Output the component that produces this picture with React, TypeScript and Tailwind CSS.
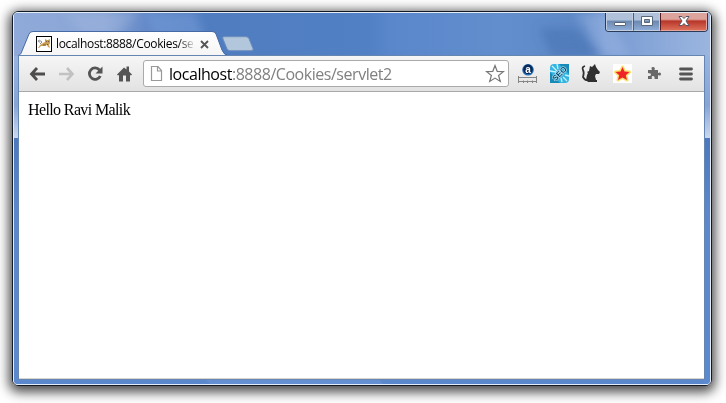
import React from 'react';

function GlassBackdrop() {
  return (
    <svg className="absolute inset-0 h-full w-full" viewBox="0 0 696 371" preserveAspectRatio="none" aria-hidden="true">
      <defs>
        <linearGradient id="top" x1="0" x2="1" y1="0" y2="0">
          <stop offset="0" stopColor="#8faad9" />
          <stop offset=".13" stopColor="#8aa6d6" />
          <stop offset=".19" stopColor="#6489c8" />
          <stop offset=".28" stopColor="#507dc0" />
          <stop offset=".51" stopColor="#5180c4" />
          <stop offset=".54" stopColor="#5a87cb" />
          <stop offset=".7" stopColor="#628ecd" />
          <stop offset=".82" stopColor="#5d88c6" />
          <stop offset=".85" stopColor="#789bd3" />
          <stop offset="1" stopColor="#9bb5df" />
        </linearGradient>
        <linearGradient id="side" x1="0" x2="0" y1="0" y2="1">
          <stop offset="0" stopColor="#98b3df" />
          <stop offset=".6" stopColor="#86a4d6" />
          <stop offset="1" stopColor="#cbd8ee" />
        </linearGradient>
        <linearGradient id="lower" x1="0" x2="0" y1="0" y2="1">
          <stop offset="0" stopColor="#4c78bd" />
          <stop offset=".3" stopColor="#5c88cb" />
          <stop offset="1" stopColor="#5b89cf" />
        </linearGradient>
        <filter id="soft"><feGaussianBlur stdDeviation="4" /></filter>
      </defs>
      <rect width="696" height="371" fill="#5b88cc" />
      <rect width="696" height="44" fill="url(#top)" />
      <g filter="url(#soft)">
        <path d="M50 0h75l-25 22H70z" fill="#a5badf" opacity=".4" />
        <path d="M130 0h50l14 30h-50z" fill="#7197d5" opacity=".6" />
        <path d="M525 15h36l27 29h-50z" fill="#4d78b6" opacity=".7" />
        <path d="M560 0h35l20 44h-22z" fill="#a5bce5" opacity=".4" />
      </g>
      <rect y="43" width="6" height="82" fill="url(#side)" />
      <rect x="690" y="43" width="6" height="82" fill="url(#side)" />
      <rect y="125" width="6" height="246" fill="url(#lower)" />
      <rect x="690" y="125" width="6" height="246" fill="url(#lower)" />
      <path d="M190 365h174l5 6H196z" fill="#6490d3" />
    </svg>
  );
}

function Tab() {
  return (
    <div className="relative mt-[18px] flex h-[25px] w-[210px] items-center pl-[18px]">
      <svg className="absolute left-0 top-0" width="210" height="25" viewBox="0 0 210 25">
        <defs>
          <linearGradient id="tabfill" x1="0" x2="0" y1="0" y2="1">
            <stop stopColor="#ffffff" />
            <stop offset="1" stopColor="#f5f5f5" />
          </linearGradient>
        </defs>
        <path d="M0 25C2 24 3 23 4 20L11 3Q12 .5 15 .5H194Q197 .5 198 3L204 19Q206 24 210 24.5V25Z" fill="url(#tabfill)" />
        <path d="M0 24.5C2 24 3 23 4 20L11 3Q12 .5 15 .5H194Q197 .5 198 3L204 19Q206 24 210 24.5" fill="none" stroke="#456aa5" />
      </svg>
      <svg className="relative shrink-0" width="16" height="16" viewBox="0 0 16 16">
        <rect x=".5" y=".5" width="15" height="15" fill="#fff" stroke="#000" />
        <path d="M2 12l2-3 3-2 2-1 0-3 2 1h1l2-1v4l-1 2 1 3-2-1-1-2-3 1-3 0-2 2z" fill="#c99d52" />
        <path d="M6 6Q3 3 2 5q0 1 2 1M4 8l2-2" fill="none" stroke="#848b85" />
        <path d="M10 5.5h1m1 0h1M7 9h3M11 8l1 1" stroke="#755e35" />
      </svg>
      <span className="relative ml-1 w-[141px] overflow-hidden whitespace-nowrap bg-gradient-to-r from-black from-[85%] to-[#ffffff] to-[99%] bg-clip-text font-['Open_Sans','Noto_Sans',sans-serif] text-[12px] leading-4 tracking-[-0.34px] text-transparent">localhost:8888/Cookies/se</span>
      <svg className="relative ml-[3px] mt-px shrink-0" width="9" height="9" viewBox="0 0 9 9">
        <path d="M1 1l7 7M8 1L1 8" stroke="#555" strokeWidth="1.8" />
      </svg>
    </div>
  );
}

function WindowControls() {
  return (
    <div className="-mt-px ml-auto mr-[2px] flex h-[20px] w-[103px] overflow-hidden rounded-b-[4px] border border-t-0 border-[#283b59]">
      <div className="flex w-[27px] justify-center border border-t-0 border-[#c0cde1] bg-linear-to-b from-[#b0c1da] from-45% via-[#6b88b1] via-50% to-[#8dabd4] pt-[10px]">
        <div className="h-[4px] w-[12px] rounded-[1px] border border-[#596477] bg-white" />
      </div>
      <div className="flex w-[27px] justify-center border border-t-0 border-l-[#49607f] border-r-[#c0cde1] border-b-[#c0cde1] bg-linear-to-b from-[#b0c1da] from-45% via-[#6b88b1] via-50% to-[#8dabd4] pt-[4px]">
        <svg width="12" height="10" viewBox="0 0 12 10">
          <path fillRule="evenodd" d="M.5.5h11v9H.5zM3.5 3.5v3h5v-3z" fill="#fff" stroke="#59677d" />
        </svg>
      </div>
      <div className="flex flex-1 justify-center border border-t-0 border-l-[#561d20] border-r-[#e5a49c] border-b-[#e5a49c] bg-linear-to-b from-[#dda49d] from-40% via-[#b73529] via-50% to-[#db6d58] pt-[4px]">
        <svg width="12" height="10" viewBox="0 0 12 10">
          <path d="M1 .5h3l2 2 2-2h3L8 5l3 4.5H8l-2-2-2 2H1L4 5z" fill="#fff" stroke="#575666" />
        </svg>
      </div>
    </div>
  );
}

function TitleBar() {
  return (
    <div className="relative flex h-[43px] items-start pl-[4px]">
      <Tab />
      <svg className="-ml-[7px] mt-[23px]" width="33" height="16" viewBox="0 0 33 16">
        <path d="M3 .7h22q2 0 3 2l4 10q.5 2-2 2H9q-2 0-3-2L2 3Q1 .7 3 .7z" fill="#b3c7dc" stroke="#6e8fbd" />
      </svg>
      <WindowControls />
    </div>
  );
}

function Navigation() {
  return (
    <div className="flex w-[124px] shrink-0 items-center pl-[10px]">
      <svg width="17" height="16" viewBox="0 0 17 16"><path d="M8 2L2.5 8 8 14M3 8h13" fill="none" stroke="#4d4d4d" strokeWidth="2.8" /></svg>
      <svg className="ml-[12px]" width="17" height="16" viewBox="0 0 17 16"><path d="M9 2l5.5 6L9 14M14 8H1" fill="none" stroke="#c2c2c2" strokeWidth="2.6" /></svg>
      <svg className="ml-[12px]" width="17" height="16" viewBox="0 0 17 16">
        <path d="M12.5 4A5.7 5.7 0 1 0 13.3 10" fill="none" stroke="#555" strokeWidth="2.8" /><path d="M15.5.5v7h-7z" fill="#555" />
      </svg>
      <svg className="ml-[12px]" width="17" height="16" viewBox="0 0 17 16"><path d="M8 1.5L1 8.5l1 1 1-.5v6.5h4v-6h3v6h4V9l1 .5 1-1-3-3V.5h-2.5v3z" fill="#555" /></svg>
    </div>
  );
}

function AddressBar() {
  return (
    <div className="flex h-[27px] w-[366px] shrink-0 items-center rounded-[3px] border border-[#aaa] bg-white pl-[6px] pr-[3px]">
      <svg className="shrink-0" width="13" height="17" viewBox="0 0 13 17">
        <path d="M1.5 1.5H8l3.5 4v10h-10zM7.5 2v4H11" fill="#fff" stroke="#999" strokeWidth="1.2" />
      </svg>
      <span className="ml-[6px] whitespace-nowrap font-['Open_Sans','Noto_Sans',sans-serif] text-[16px] leading-5 tracking-[-0.46px] text-[#808080]"><span className="text-black">localhost</span>:8888/Cookies/servlet2</span>
      <svg className="ml-auto shrink-0" width="20" height="20" viewBox="0 0 20 20">
        <path d="M10 1.5l2.2 5.8 6.2.3-4.8 3.9 1.7 6-5.3-3.4-5.3 3.4 1.7-6-4.8-3.9 6.2-.3z" fill="#fff" stroke="#777" strokeWidth="1.2" />
      </svg>
    </div>
  );
}

function Extensions() {
  return (
    <div className="flex flex-1 items-center pl-[9px]">
      <svg width="20" height="19" viewBox="0 0 20 19">
        <circle cx="10" cy="5.8" r="5.8" fill="#2870b5" /><circle cx="10" cy="5.4" r="4.8" fill="#06285a" />
        <text x="10" y="8.5" textAnchor="middle" fontFamily="Liberation Sans, sans-serif" fontSize="10" fontWeight="bold" fill="white">a</text>
        <path d="M.5 12v7M18.5 12v7M1 13.5h17M1 17.5h17M5.5 16.5v2.5M9.5 16.5v2.5M14.5 16.5v2.5" fill="none" stroke="#858585" />
      </svg>
      <svg className="ml-[12px]" width="20" height="20" viewBox="0 0 20 20">
        <rect width="19" height="19" rx="4" fill="#36b3df" />
        <path d="M9 0h10v10zM0 8v11h10z" fill="#168bb9" />
        <path d="M2 2l5 5M7 0l1 5M0 7l6 1M12 18l-1-4M17 17l-4-4M19 12l-4-1" stroke="#c1f2ff" strokeWidth="1.3" />
        <text transform="translate(5.4 17.6) rotate(-45)" fontFamily="Liberation Sans, sans-serif" fontSize="8" fontWeight="bold" fill="#07446d" stroke="#c6f0fa" strokeWidth="1" paintOrder="stroke">SEO</text>
      </svg>
      <svg className="ml-[11px]" width="20" height="19" viewBox="0 0 20 19">
        <path d="M4 2Q.5 3 2 6t0 7q2 4 6 3" fill="none" stroke="#303030" strokeWidth="1.7" />
        <path d="M9 2l2 1 3-3 1 3 2 3 2 2-1 2h-3l-1 2 1 4h1v2H7l-2-2 1-5 1-2-1-1 2-1z" fill="#303030" />
      </svg>
      <svg className="ml-[12px]" width="19" height="19" viewBox="0 0 19 19">
        <rect width="19" height="19" fill="#fff" />
        <path d="M9.5 3l2 4.5 5 .5-3.7 3.2L14 16l-4.5-2.5L5 16l1.2-4.8L2.5 8l5-.5z" fill="#f02428" stroke="#f9df69" strokeWidth="3" strokeLinejoin="round" paintOrder="stroke" />
      </svg>
      <svg className="ml-[16px]" width="13" height="14" viewBox="0 0 13 14">
        <path d="M0 3h4Q2.5 0 5 0t1.5 3H10v3q3-1.5 3 1t-3 1v4H6.5Q7 9 5 9T4 12H0V9q3 0 3-1.5T0 6z" fill="#686868" />
      </svg>
      <svg className="ml-[18px]" width="14" height="14" viewBox="0 0 14 14"><path d="M1.5 2h11M1.5 7h11M1.5 12h11" stroke="#555" strokeWidth="2.8" strokeLinecap="round" /></svg>
    </div>
  );
}

export default function App() {
  return (
    <div className="h-[403px] w-[726px] overflow-hidden bg-white pl-[12px] pt-[11px]">
      <div className="h-[375px] w-[700px] rounded-[6px] border border-[#121a26] shadow-[0_3px_12px_3px_rgba(0,0,0,0.72)]">
        <div className="relative flex h-[373px] flex-col overflow-hidden rounded-[5px] border border-[#e4ecf7]">
          <GlassBackdrop />
          <TitleBar />
          <div className="relative ml-[5px] mr-[6px] flex h-[323px] flex-col overflow-hidden bg-white shadow-[0_0_0_1px_#6686b2]">
            <div className="flex h-[36px] shrink-0 items-center border-b border-[#a8a8a8] bg-linear-to-b from-[#f6f6f6] to-[#e2e2e2]">
              <Navigation />
              <AddressBar />
              <Extensions />
            </div>
            <main className="flex-1 border-b border-[#d7d5d1] px-[9px] pt-[9px] font-['Liberation_Serif',serif] text-[16px] leading-[18px] tracking-[-0.62px] text-black">Hello Ravi Malik</main>
          </div>
        </div>
      </div>
    </div>
  );
}
